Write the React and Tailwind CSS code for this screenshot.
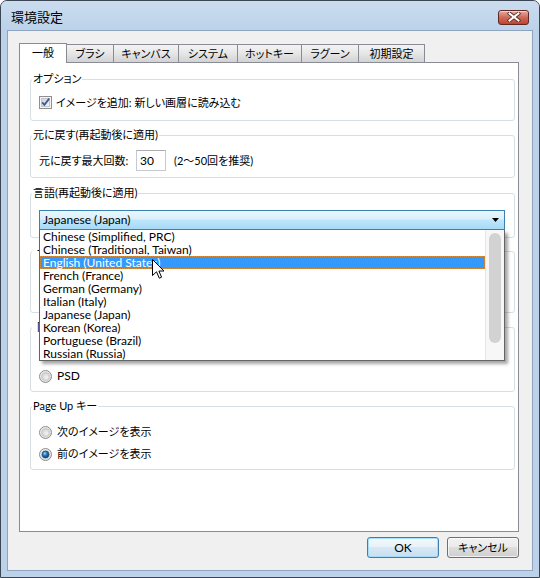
import React from "react";

const FONT = "font-['Lato','Noto_Sans_CJK_JP',sans-serif] [font-feature-settings:'palt']";

function CheckBox() {
  return (
    <svg width="13" height="13" viewBox="0 0 13 13" className="shrink-0">
      <defs>
        <linearGradient id="cbIn" x1="0" y1="0" x2="1" y2="1">
          <stop offset="0" stopColor="#cbcfd5" />
          <stop offset="1" stopColor="#f6f6f6" />
        </linearGradient>
      </defs>
      <rect x="0.5" y="0.5" width="12" height="12" fill="#f4f4f4" stroke="#8f8f8f" />
      <rect x="2.5" y="2.5" width="8" height="8" fill="url(#cbIn)" stroke="#c2c6cc" />
      <path d="M3.2 6.3 L5.4 8.8 L10.2 2.6" stroke="#3c5a96" strokeWidth="1.8" fill="none" />
    </svg>
  );
}

function Radio({ checked }) {
  return (
    <svg width="13" height="13" viewBox="0 0 13 13" className="shrink-0">
      <defs>
        <radialGradient id="rOut" cx="0.4" cy="0.4" r="0.7">
          <stop offset="0" stopColor="#ffffff" />
          <stop offset="1" stopColor="#d8d8d8" />
        </radialGradient>
        <radialGradient id="rIn" cx="0.6" cy="0.6" r="0.7">
          <stop offset="0" stopColor="#f4f4f4" />
          <stop offset="1" stopColor="#c9c9c9" />
        </radialGradient>
        <radialGradient id="rDot" cx="0.4" cy="0.35" r="0.7">
          <stop offset="0" stopColor="#9fdcfc" />
          <stop offset="0.45" stopColor="#1f78c0" />
          <stop offset="1" stopColor="#0a3a6a" />
        </radialGradient>
      </defs>
      <circle cx="6.5" cy="6.5" r="6" fill="url(#rOut)" stroke="#8f8f8f" />
      <circle cx="6.5" cy="6.5" r="4" fill="url(#rIn)" stroke="#b9b9b9" strokeWidth="0.6" />
      {checked && <circle cx="6.5" cy="6.5" r="3.4" fill="url(#rDot)" stroke="#173b63" strokeWidth="0.6" />}
    </svg>
  );
}

function Group({ legend, children, className, hidden }) {
  return (
    <fieldset className={"min-w-0 border border-[#d5dfe5] rounded-[3px] pl-[8px] pr-[9px] " + className}>
      <legend
        className={
          hidden
            ? "-ml-[7px] pl-[5px] pr-[1px] text-[11px] leading-[14px] text-black"
            : "-ml-[7px] px-[1px] text-[11px] leading-[14px] text-black"
        }
      >
        {legend}
      </legend>
      {children}
    </fieldset>
  );
}

function RadioRow({ checked, label, latin }) {
  return (
    <div className="h-[22px] flex items-center gap-[5px]">
      <Radio checked={checked} />
      <span className={latin ? "text-[12px] leading-[14px]" : "text-[11px] leading-[14px]"}>{label}</span>
    </div>
  );
}

const LANGS = [
  "Chinese (Simplified, PRC)",
  "Chinese (Traditional, Taiwan)",
  "English (United States)",
  "French (France)",
  "German (Germany)",
  "Italian (Italy)",
  "Japanese (Japan)",
  "Korean (Korea)",
  "Portuguese (Brazil)",
  "Russian (Russia)",
];

function Cursor() {
  return (
    <svg width="14" height="21" viewBox="0 0 14 21" className="absolute left-[152px] top-[259px] z-50">
      <path
        d="M0.5 0.5 L0.5 16.5 L4.5 12.8 L7.3 19.2 L9.6 18.2 L6.9 12 L12 12 Z"
        fill="#ffffff"
        stroke="#000000"
        strokeWidth="1"
        strokeLinejoin="miter"
      />
    </svg>
  );
}

export default function App() {
  const tabs = [
    { label: "ブラシ", w: "w-[48px]" },
    { label: "キャンバス", w: "w-[66px]" },
    { label: "システム", w: "w-[60px]" },
    { label: "ホットキー", w: "w-[65px]" },
    { label: "ラグーン", w: "w-[58px]" },
    { label: "初期設定", w: "w-[67px]" },
  ];

  return (
    <div className={"relative w-[540px] h-[578px] bg-white overflow-hidden text-black " + FONT}>
      <div className="w-full h-full flex flex-col rounded-t-[7px] border border-[#3b4654] bg-[#bcd2ea]">
        {/* title bar */}
        <div className="h-[29px] shrink-0 flex items-center pl-[10px] pr-[10px] rounded-t-[6px] bg-gradient-to-b from-[#cbdcef] to-[#bbd2ea]">
          <span className="text-[13px] leading-[16px] mt-[2px]">環境設定</span>
          <div className="ml-auto mt-[3px] w-[31px] h-[15px] rounded-[3px] border border-[#5f2a24] bg-gradient-to-b from-[#e6a99e] via-[#cf6a58] to-[#c0412e] flex items-center justify-center shadow-[inset_0_1px_0_rgba(255,255,255,0.5)]">
            <svg width="14" height="10" viewBox="0 0 14 10">
              <path d="M2.5 1.5 L11.5 8.5 M11.5 1.5 L2.5 8.5" stroke="#4a2a26" strokeWidth="3.6" strokeLinecap="square" />
              <path d="M2.5 1.5 L11.5 8.5 M11.5 1.5 L2.5 8.5" stroke="#ffffff" strokeWidth="2" strokeLinecap="square" />
            </svg>
          </div>
        </div>

        {/* client */}
        <div className="flex-1 mx-[6px] mb-[6px] border border-[#8fa5bd] bg-[#f0f0f0] flex flex-col pt-[11px] pl-[11px] pr-[13px]">
          {/* tabs */}
          <div className="flex items-end h-[20px] relative z-10">
            <div className="w-[48px] h-[20px] -mb-px bg-white border border-b-0 border-[#898c95] flex items-center justify-center text-[11px] leading-[14px] pb-[2px]">
              一般
            </div>
            {tabs.map((t) => (
              <div
                key={t.label}
                className={t.w + " -ml-px h-[18px] border border-b-0 border-[#898c95] bg-gradient-to-b from-[#f4f4f4] via-[#e6e6e6] to-[#d2d2d2] flex items-center justify-center text-[11px] leading-[14px]"}
              >
                {t.label}
              </div>
            ))}
          </div>

          {/* panel */}
          <div className="h-[470px] border border-[#898c95] bg-white flex flex-col pt-[9px] pl-[10px] pr-[3px]">
            <Group legend="オプション" className="pt-[10px] pb-[11px]">
              <div className="h-[13px] flex items-center gap-[4px]">
                <CheckBox />
                <span className="text-[11px] leading-[14px]">イメージを追加: 新しい画層に読み込む</span>
              </div>
            </Group>

            <Group legend="元に戻す(再起動後に適用)" className="mt-[7px] pt-[8px] pb-[6px]">
              <div className="h-[21px] flex items-center">
                <span className="w-[97px] text-[11px] leading-[14px]">元に戻す最大回数:</span>
                <div className="w-[30px] h-[21px] border border-[#c5cad2] border-t-[#abadb3] bg-white flex items-center pl-[3px] text-[12px] leading-[14px]">
                  30
                </div>
                <span className="ml-[8px] text-[11px] leading-[14px]">(2～50回を推奨)</span>
              </div>
            </Group>

            <Group legend="言語(再起動後に適用)" className="mt-[8px] pt-[10px] pb-[7px]">
              <div className="relative z-30">
                <div className="h-[20px] border border-[#3c7fb1] bg-[linear-gradient(to_bottom,#eaf6fd_0%,#d9f0fc_45%,#bee6fd_50%,#a7d9f5_100%)] flex items-center pl-[3px] pr-[5px]">
                  <span className="text-[12px] leading-[14px]">Japanese (Japan)</span>
                  <svg width="7" height="4" viewBox="0 0 7 4" className="ml-auto">
                    <path d="M0 0 L7 0 L3.5 4 Z" fill="#000" />
                  </svg>
                </div>
                <div className="absolute left-0 right-0 top-full bg-white border border-t-0 border-[#646464] flex shadow-[3px_3px_3px_rgba(0,0,0,0.35)]">
                  <div className="flex-1 flex flex-col">
                    {LANGS.map((l) => (
                      <div
                        key={l}
                        className={
                          l === "English (United States)"
                            ? "h-[13px] flex items-center pl-[2px] bg-[#3399ff] text-white border border-dotted border-[#d98c3a]"
                            : "h-[13px] flex items-center pl-[3px]"
                        }
                      >
                        <span className="text-[12px] leading-[13px]">{l}</span>
                      </div>
                    ))}
                  </div>
                  <div className="w-[19px] border-l border-[#e6e6e6] bg-[#f7f7f7] pt-[3px] pl-[3px]">
                    <div className="w-[12px] h-[110px] rounded-[6px] bg-[#d2d2d2]" />
                  </div>
                </div>
              </div>
            </Group>

            <Group hidden legend="一時ファイル" className="mt-[6px] pt-[8px] pb-[2px]">
              <RadioRow label="有効" />
              <RadioRow label="無効" />
            </Group>

            <Group hidden legend="同時保存形式" className="mt-[7px] pt-[9px] pb-[4px]">
              <RadioRow label="PNG" latin />
              <RadioRow label="PSD" latin />
            </Group>

            <Group legend="Page Up キー" className="mt-[7px] pt-[8px] pb-[4px]">
              <RadioRow label="次のイメージを表示" />
              <RadioRow checked label="前のイメージを表示" />
            </Group>
          </div>

          {/* buttons */}
          <div className="flex justify-end gap-[8px] mt-[5px]">
            <div className="w-[72px] h-[21px] rounded-[3px] border border-[#3c7fb1] bg-[linear-gradient(to_bottom,#f4f9fc_0%,#e8f2f9_45%,#d7e8f4_50%,#c9dff0_100%)] shadow-[inset_0_0_0_1px_rgba(160,220,250,0.9)] flex items-center justify-center text-[12px] leading-[14px]">
              OK
            </div>
            <div className="w-[72px] h-[21px] rounded-[3px] border border-[#707070] bg-[linear-gradient(to_bottom,#f2f2f2_0%,#ebebeb_45%,#dddddd_50%,#cfcfcf_100%)] shadow-[inset_0_0_0_1px_rgba(255,255,255,0.7)] flex items-center justify-center text-[11px] leading-[14px]">
              キャンセル
            </div>
          </div>
        </div>
      </div>
      <Cursor />
    </div>
  );
}
